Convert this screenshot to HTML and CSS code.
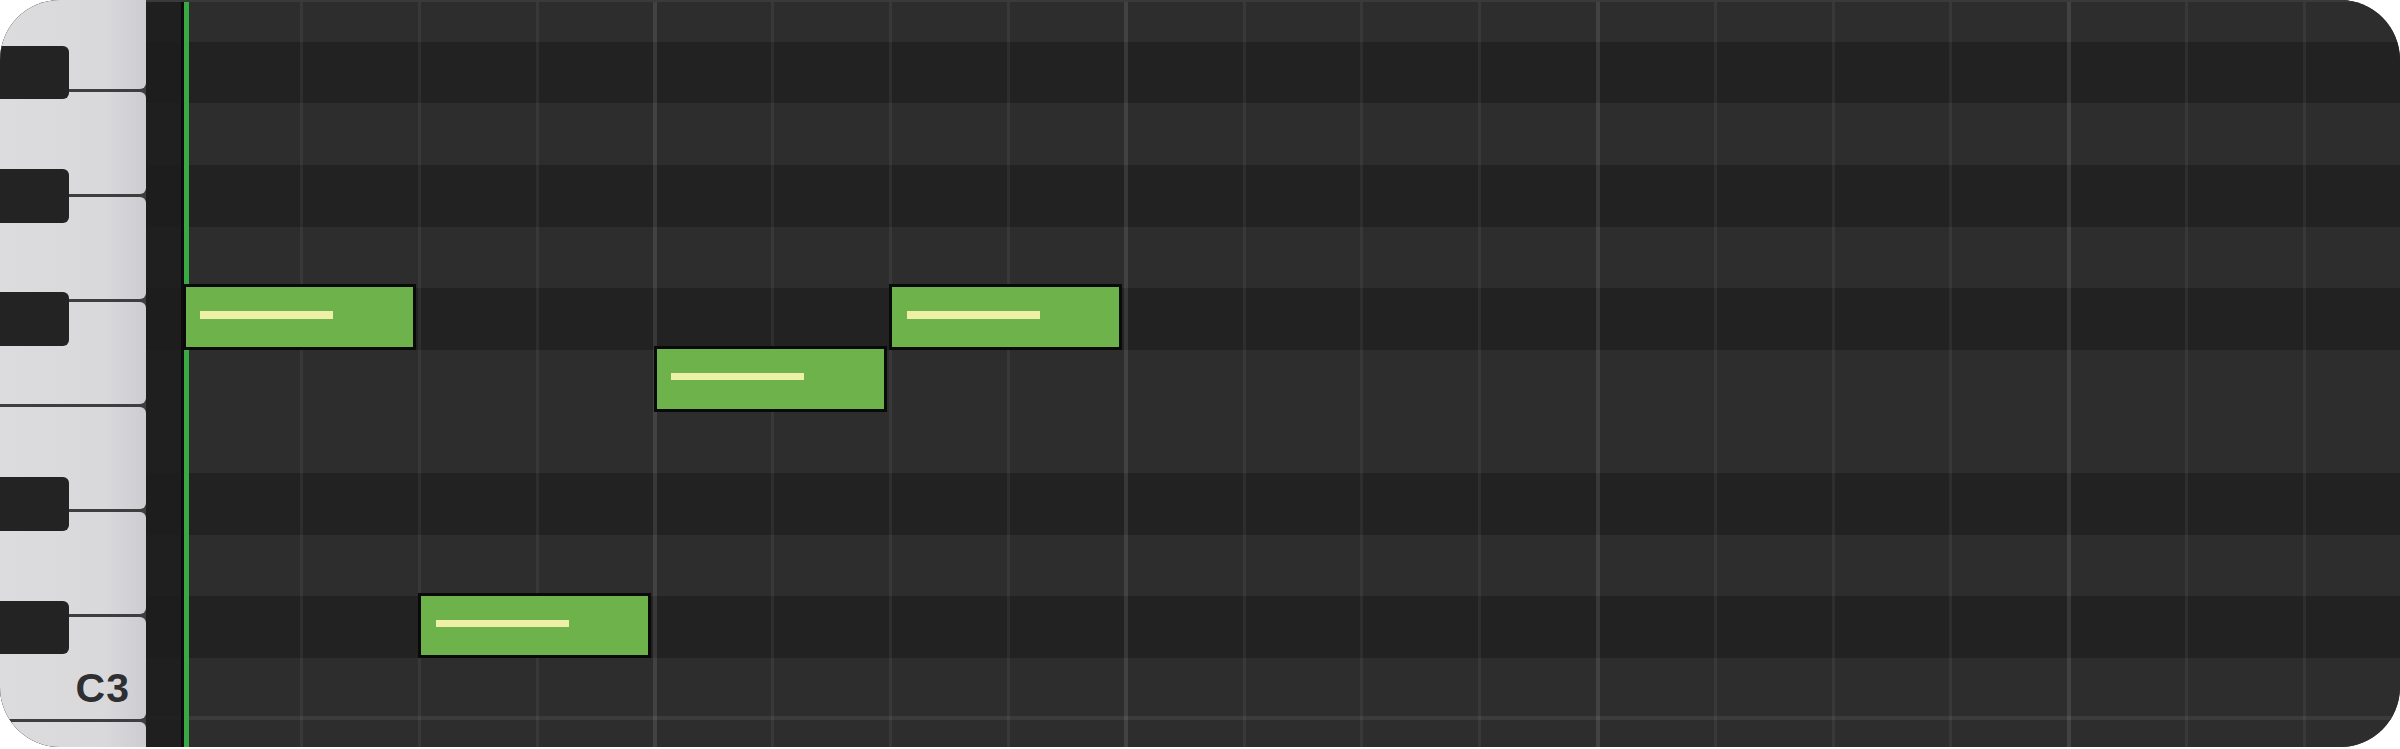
FILE: index.html
```html
<!DOCTYPE html>
<html lang="en">
<head>
<meta charset="utf-8">
<title>Piano Roll</title>
<link rel="stylesheet" href="styles.css">
</head>
<body>
<div class="roll">
  <div class="piano">
    <div class="whites">
      <div class="wkey"></div>
      <div class="wkey"></div>
      <div class="wkey"></div>
      <div class="wkey"></div>
      <div class="wkey"></div>
      <div class="wkey"></div>
      <div class="wkey wkey-c"><span class="label">C3</span></div>
      <div class="wkey"></div>
    </div>
    <div class="bkey" style="top:45.65px"></div>
    <div class="bkey" style="top:168.95px"></div>
    <div class="bkey" style="top:292.25px"></div>
    <div class="bkey" style="top:477.2px"></div>
    <div class="bkey" style="top:600.5px"></div>
  </div>
  <div class="grid">
    <div class="rows">
      <div class="row w"></div>
      <div class="row b"></div>
      <div class="row w"></div>
      <div class="row b"></div>
      <div class="row w"></div>
      <div class="row b"></div>
      <div class="row w"></div>
      <div class="row w"></div>
      <div class="row b"></div>
      <div class="row w"></div>
      <div class="row b"></div>
      <div class="row w c"></div>
      <div class="row w"></div>
    </div>
    <div class="pre"></div>
    <div class="content">
      <div class="beats">
        <div class="beat first"></div>
        <div class="beat"></div>
        <div class="beat"></div>
        <div class="beat"></div>
        <div class="beat bar"></div>
        <div class="beat"></div>
        <div class="beat"></div>
        <div class="beat"></div>
        <div class="beat bar"></div>
        <div class="beat"></div>
        <div class="beat"></div>
        <div class="beat"></div>
        <div class="beat bar"></div>
        <div class="beat"></div>
        <div class="beat"></div>
        <div class="beat"></div>
        <div class="beat bar"></div>
        <div class="beat"></div>
        <div class="beat"></div>
        <div class="beat"></div>
      </div>
      <div class="playhead"></div>
      <div class="note" style="left:-1.5px;top:284.25px"><div class="vel"></div></div>
      <div class="note" style="left:469.7px;top:345.9px"><div class="vel"></div></div>
      <div class="note" style="left:705.3px;top:284.25px"><div class="vel"></div></div>
      <div class="note" style="left:234.1px;top:592.5px"><div class="vel"></div></div>
    </div>
  </div>
</div>
</body>
</html>
```

FILE: styles.css
```css
html, body {
  margin: 0;
  padding: 0;
  background: #ffffff;
}

.roll {
  display: flex;
  width: 2400px;
  height: 747px;
  border-radius: 60px;
  overflow: hidden;
  background: #2d2d2d;
}

/* ---------- piano keyboard ---------- */
.piano {
  position: relative;
  flex: 0 0 146px;
  height: 100%;
  background: #3e3e3e;
  overflow: hidden;
}

.whites {
  display: flex;
  flex-direction: column;
  gap: 3px;
  margin-top: -13.6px;
}

.wkey {
  flex: 0 0 102.1px;
  height: 102.1px;
  border-radius: 0 6px 6px 0;
  background: linear-gradient(90deg, #dcdcdf 0%, #d9d9dc 72%, #cdcdd1 100%);
  display: flex;
  align-items: flex-end;
  justify-content: flex-end;
  box-sizing: border-box;
}

.wkey-c {
  padding: 0 16px 10px 0;
}

.label {
  font-family: "Liberation Sans", Arial, sans-serif;
  font-weight: 700;
  font-size: 41px;
  line-height: 1;
  letter-spacing: 1px;
  color: #2f2f31;
}

.bkey {
  position: absolute;
  left: 0;
  width: 69px;
  height: 53.65px;
  background: #232323;
  border-radius: 0 6px 6px 0;
}

/* ---------- grid ---------- */
.grid {
  position: relative;
  flex: 1 1 auto;
  height: 100%;
  overflow: hidden;
}

.grid::after {
  content: "";
  position: absolute;
  left: 0;
  right: 0;
  top: 0;
  height: 1.5px;
  background: #3a3a3a;
}

.rows {
  display: flex;
  flex-direction: column;
  margin-top: -20px;
}

.row {
  flex: 0 0 61.65px;
  height: 61.65px;
  box-sizing: border-box;
}

.row.w { background: #2d2d2d; }
.row.b { background: #222222; }
.row.c { box-shadow: inset 0 -4px 0 #3b3b3b; }

.pre {
  position: absolute;
  left: 0;
  top: 0;
  bottom: 0;
  width: 35px;
  background: rgba(28, 28, 28, 0.82);
  border-right: 3px solid #0c0c0c;
}

.content {
  position: absolute;
  left: 38px;
  top: 0;
  right: 0;
  bottom: 0;
}

.beats {
  display: flex;
  height: 100%;
}

.beat {
  position: relative;
  flex: 0 0 117.8px;
  height: 100%;
}

.beat::before {
  content: "";
  position: absolute;
  left: -1.5px;
  top: 0;
  bottom: 0;
  width: 3px;
  background: rgba(255, 255, 255, 0.055);
}

.beat.bar::before {
  left: -2px;
  width: 4px;
  background: rgba(255, 255, 255, 0.1);
}

.beat.first::before {
  display: none;
}

.playhead {
  position: absolute;
  left: 0;
  top: 0;
  bottom: 0;
  width: 5px;
  background: #39a943;
}

.note {
  position: absolute;
  width: 233px;
  height: 65.65px;
  box-sizing: border-box;
  border: 3.5px solid #0a0a0a;
  background: #6eb24b;
  padding: 24px 0 0 14.5px;
  z-index: 2;
}

.vel {
  width: 133px;
  height: 7.5px;
  background: #eef0a7;
}
```
